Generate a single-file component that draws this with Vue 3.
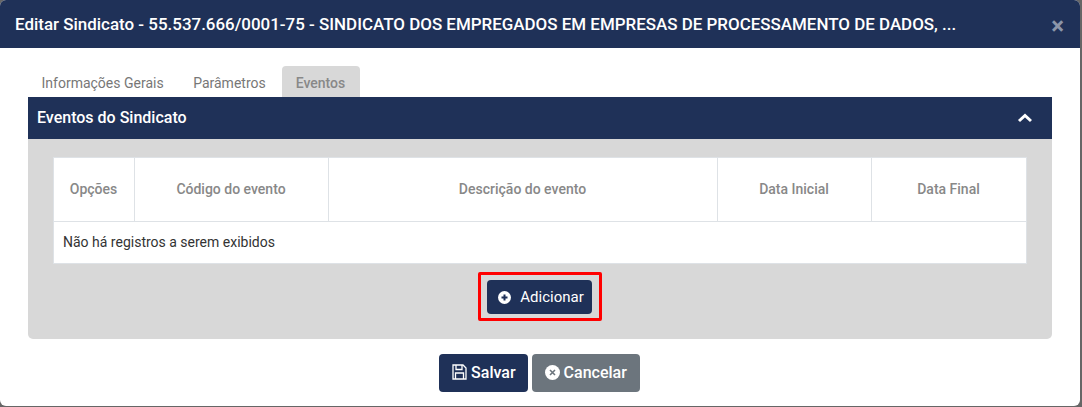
<template>
    <div class="page">
        <div class="modal">
            <div class="modal-header">
                <span class="modal-title">Editar Sindicato - 55.537.666/0001-75 - SINDICATO DOS EMPREGADOS EM EMPRESAS DE PROCESSAMENTO DE DADOS, ...</span>
                <span class="close">×</span>
            </div>
            <div class="modal-body">
                <div class="tabs">
                    <div v-for="tab in tabs" :key="tab" class="tab" :class="{ active: tab === 'Eventos' }">{{ tab }}</div>
                </div>
                <div class="section-header">
                    <span class="section-title">Eventos do Sindicato</span>
                    <svg width="16" height="10" viewBox="0 0 16 10">
                        <path d="M2 8 L8 2.5 L14 8" fill="none" stroke="#fff" stroke-width="3" />
                    </svg>
                </div>
                <div class="section-body">
                    <table class="events">
                        <thead>
                            <tr>
                                <th v-for="col in columns" :key="col.name" :style="{ width: col.width + 'px' }">{{ col.name }}</th>
                            </tr>
                        </thead>
                        <tbody>
                            <tr>
                                <td colspan="5">Não há registros a serem exibidos</td>
                            </tr>
                        </tbody>
                    </table>
                    <div class="add-row">
                        <div class="highlight">
                            <button class="btn btn-navy add">
                                <svg width="13" height="13" viewBox="0 0 13 13">
                                    <circle cx="6.5" cy="6.5" r="6.5" fill="#fff" />
                                    <path d="M6.5 3.5 V9.5 M3.5 6.5 H9.5" stroke="#1f3158" stroke-width="2" />
                                </svg>
                                Adicionar
                            </button>
                        </div>
                    </div>
                </div>
                <div class="footer">
                    <button class="btn btn-navy action save">
                        <svg width="15" height="16" viewBox="0 0 15 16">
                            <path d="M1 1 H11 L14 4 V15 H1 Z" fill="none" stroke="#fff" stroke-width="1.3" />
                            <path d="M4 1 V5.5 H10 V1 M3.5 15 V9 H11.5 V15" fill="none" stroke="#fff" stroke-width="1.3" />
                        </svg>
                        Salvar
                    </button>
                    <button class="btn btn-gray action">
                        <svg width="15" height="15" viewBox="0 0 15 15">
                            <circle cx="7.5" cy="7.5" r="7.5" fill="#fff" />
                            <path d="M5 5 L10 10 M10 5 L5 10" stroke="#6c757d" stroke-width="1.6" />
                        </svg>
                        Cancelar
                    </button>
                </div>
            </div>
        </div>
    </div>
</template>

<script setup>
const tabs = ['Informações Gerais', 'Parâmetros', 'Eventos']

const columns = [
    { name: 'Opções', width: 79 },
    { name: 'Código do evento', width: 192 },
    { name: 'Descrição do evento', width: 387 },
    { name: 'Data Inicial', width: 152 },
    { name: 'Data Final', width: 153 },
]
</script>

<style>
html, body {
    margin: 0;
    background: #666;
}
</style>

<style scoped>
.page {
    width: 1082px;
    height: 407px;
    overflow: hidden;
    background: #666;
    font-family: Roboto, sans-serif;
}

.modal {
    width: 1080px;
    height: 406px;
    background: #fff;
    border-radius: 6px;
    overflow: hidden;
}

.modal-header {
    height: 48px;
    box-sizing: border-box;
    background: #1f3158;
    color: #fff;
    display: flex;
    align-items: center;
    justify-content: space-between;
    padding: 0 16px 0 15px;
}

.modal-title {
    font-size: 16.96px;
    font-weight: 500;
    white-space: nowrap;
}

.close {
    color: #8c96aa;
    font-size: 24px;
    font-weight: 700;
    line-height: 1;
    margin-top: 3px;
}

.modal-body {
    padding: 18px 28px 0;
}

.tabs {
    display: flex;
    height: 31px;
}

.tab {
    padding: 0 15px 0 13.5px;
    font-size: 14px;
    line-height: 34px;
    color: #777;
}

.tab:nth-child(2) {
    padding-left: 14.5px;
}

.tab.active {
    background: #d8d8d8;
    border-radius: 4px 4px 0 0;
    font-weight: 500;
    color: #888;
    margin-left: 1px;
    padding: 0 15px 0 14px;
}

.section-header {
    height: 42px;
    background: #1f3158;
    color: #fff;
    display: flex;
    align-items: center;
    justify-content: space-between;
    padding: 0 19px 0 9px;
    font-size: 16px;
    font-weight: 500;
}

.section-title {
    margin-bottom: 1px;
}

.section-body {
    height: 200px;
    box-sizing: border-box;
    background: #d8d8d8;
    border-radius: 0 0 5px 5px;
    padding: 18px 25px 0;
}

.events {
    width: 974px;
    table-layout: fixed;
    border-collapse: collapse;
    background: #fff;
    font-size: 14px;
}

.events th {
    height: 61px;
    padding: 0 1px 2px 0;
    border: 1px solid #dee2e6;
    color: #888;
    font-weight: 500;
    font-size: 14px;
    text-align: center;
}

.events td {
    height: 39px;
    padding: 0 9px 2px;
    border: 1px solid #dee2e6;
    color: #333;
}

.add-row {
    display: flex;
    justify-content: center;
    margin-top: 8px;
}

.highlight {
    padding: 5px 7px 4px 6px;
    border: 3px solid #f00;
    border-radius: 2px;
}

.btn {
    border: none;
    color: #fff;
    font-family: inherit;
    border-radius: 4px;
    display: flex;
    align-items: center;
}

.btn-navy {
    background: #1f3158;
}

.btn-gray {
    background: #6c757d;
}

.add {
    height: 34px;
    padding: 0 8px 0 11px;
    gap: 9px;
    font-size: 15px;
}

.footer {
    display: flex;
    justify-content: center;
    gap: 4px;
    margin-top: 15px;
    padding-right: 1px;
}

.action {
    height: 38px;
    padding: 0 13px 2px;
    gap: 4px;
    font-size: 16px;
    font-weight: 500;
}

.action.save {
    padding-right: 12px;
}
</style>
